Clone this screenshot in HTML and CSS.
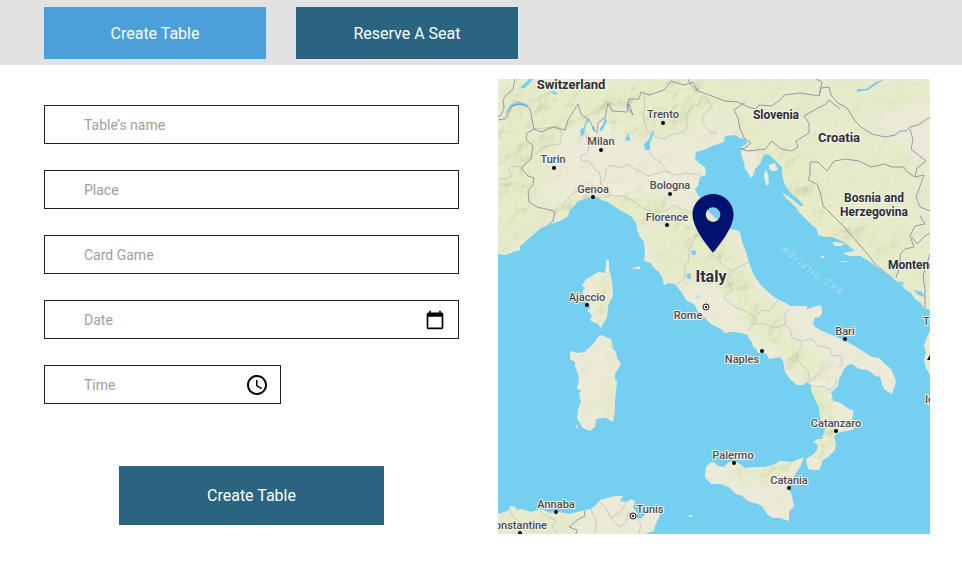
FILE: index.html
```html
<!DOCTYPE html>
<html lang="en">
<head>
<meta charset="utf-8">
<meta name="viewport" content="width=device-width, initial-scale=1">
<title>Create Table</title>
<link rel="stylesheet" href="styles.css">
</head>
<body>
<header class="topbar">
  <button type="button" class="btn btn-tab btn-active">Create Table</button>
  <button type="button" class="btn btn-tab">Reserve A Seat</button>
</header>
<main class="content">
  <form class="form">
    <div class="field"><input class="input" type="text" aria-label="Table’s name" placeholder="Table’s name"></div>
    <div class="field"><input class="input" type="text" aria-label="Place" placeholder="Place"></div>
    <div class="field"><input class="input" type="text" aria-label="Card Game" placeholder="Card Game"></div>
    <div class="field">
      <input class="input" type="text" aria-label="Date" placeholder="Date">
      <button type="button" class="picker" aria-label="Pick a date">
        <svg width="20" height="20" viewBox="0 0 24 24"><path d="M20 3h-1V1h-2v2H7V1H5v2H4c-1.1 0-2 .9-2 2v16c0 1.1.9 2 2 2h16c1.1 0 2-.9 2-2V5c0-1.1-.9-2-2-2zm0 18H4V8h16v13z"/></svg>
      </button>
    </div>
    <div class="field field-short">
      <input class="input" type="text" aria-label="Time" placeholder="Time">
      <button type="button" class="picker" aria-label="Pick a time">
        <svg width="24" height="24" viewBox="0 0 24 24"><path d="M12 2C6.5 2 2 6.5 2 12s4.500 10 10 10 10-4.500 10-10S17.500 2 12 2zm0 18c-4.400 0-8-3.600-8-8s3.600-8 8-8 8 3.600 8 8-3.600 8-8 8z"/><path d="M12.500 7H11v6l5.200 3.200.8-1.300-4.500-2.700z"/></svg>
      </button>
    </div>
    <button type="submit" class="btn btn-submit">Create Table</button>
  </form>
  <svg class="map" viewBox="0 0 432 455" role="img" aria-label="Map of Italy">
    <defs>
      <path id="land" d="M0 0H432V231L426 229 423 224 417 220 413 214 407 210 404 206 399 203 393 197 387 193 379 188 371 182 364 178 357 172 351 167 346 163 340 160 334 158 327 158 320 156 319 150 315 147 311 143 306 138 301 133 298 128 294 125 301 127 306 127 304 124 299 119 294 115 289 109 286 103 284 95 284 88 279 83 274 78 270 75 266 76 264 80 262 85 257 90 256 95 253 99 250 94 247 90 246 84 244 78 243 73 242 69 245 67 249 65 248 60 242 59 237 56 227 57 226 63 220 65 214 67 208 70 202 72 198 73 197 80 201 84 207 88 208 96 202 98 200 107 197 110 199 114 203 120 211 133 221 142 232 150 238 151 242 153 244 163 248 173 251 183 254 192 257 198 263 206 269 212 276 218 281 221 286 223 292 227 309 227 309 230 313 229 318 227 322 226 324 229 324 235 321 238 317 239 315 243 316 247 322 251 329 254 337 257 347 262 357 267 366 273 374 278 381 279 387 285 393 290 397 299 398 303 394 315 390 313 386 310 384 305 382 298 377 297 373 293 369 291 361 290 354 285 350 286 346 290 344 295 341 300 340 307 336 311 333 313 335 322 340 323 344 325 351 330 356 332 354 340 357 345 356 350 349 352 342 353 338 355 336 358 338 365 337 371 331 377 324 382 323 387 321 391 315 391 310 390 308 380 316 375 319 371 320 366 315 363 320 360 324 360 326 354 327 350 324 342 322 338 321 328 317 320 314 313 313 307 310 303 304 306 299 306 292 300 287 293 286 287 285 281 282 278 277 279 271 280 269 276 267 274 260 274 258 270 255 268 254 263 251 260 250 256 247 255 238 253 234 253 227 254 224 251 221 249 213 245 206 238 200 233 197 226 188 221 184 214 177 205 170 204 166 206 165 201 162 194 155 188 153 184 146 182 147 175 146 163 142 158 139 150 138 144 134 138 128 134 123 132 116 127 110 123 104 121 99 118 95 117 87 120 80 122 76 127 72 130 70 137 62 142 50 146 43 149 37 154 30 160 26 164 22 167 22 171 15 173 8 176 0 175Z
      M108 180 111 182 111 190 113 197 114 204 115 217 112 222 110 227 109 238 106 243 103 249 100 245 95 243 92 241 94 237 92 234 89 232 92 229 90 224 86 222 88 218 84 213 87 209 84 207 88 200 94 197 100 193 107 194 108 187Z
      M104 256 108 258 113 260 114 265 115 270 118 273 119 279 123 285 120 290 117 295 117 300 119 303 118 311 117 321 117 330 115 343 108 339 103 339 98 340 97 348 92 352 85 349 79 340 80 330 83 323 81 315 83 311 79 310 81 300 80 295 77 287 77 283 72 280 72 272 80 274 86 273 92 268 96 264 100 258Z
      M306 378 304 383 302 388 298 394 294 400 291 405 291 410 294 417 296 427 291 433 291 442 282 439 276 439 271 437 267 432 264 427 257 424 251 423 244 417 238 415 231 408 222 405 213 405 207 398 208 388 212 384 216 383 220 387 226 388 231 383 239 383 247 389 257 388 267 388 275 386 282 382 294 383Z
      M0 435 10 432 12 427 16 427 19 431 23 430 33 433 43 430 52 434 60 433 72 435 83 432 93 430 98 426 102 421 109 419 117 417 125 417 122 422 128 423 134 420 137 423 135 428 139 434 138 438 142 440 146 437 150 432 163 434 160 440 157 447 156 452 147 455H0Z
      M432 252 428 260 426 267 428 274 426 281 428 289 432 296Z
      M134 190 142 187 142 190 138 190ZM271 86 277 84 280 91 275 92 271 90ZM267 91 270 94 271 106 268 106 266 98ZM284 113 294 120 302 127 296 126 288 119ZM334 163 346 164 344 167 337 167ZM345 174 357 172 369 176 364 177 351 177ZM343 182 350 182 350 183 343 183ZM323 177 326 177 326 179 323 179ZM78 345 80 348 78 349ZM191 436H194V438H191Z"/>
      <clipPath id="coast"><use href="#land"/></clipPath>
      <filter id="soft" x="-20%" y="-20%" width="140%" height="140%"><feGaussianBlur stdDeviation="5"/></filter>
      <filter id="relief" x="0" y="0" width="100%" height="100%">
        <feTurbulence type="fractalNoise" baseFrequency=".045" numOctaves="3" seed="8"/>
        <feColorMatrix values="0 0 0 0 0  0 0 0 0 0  0 0 0 0 0  1 0 0 0 0"/>
        <feDiffuseLighting surfaceScale="7" diffuseConstant="1.300" lighting-color="#fbffd8"><feDistantLight azimuth="225" elevation="52"/></feDiffuseLighting>
      </filter>
      <mask id="hills">
        <rect width="432" height="455" fill="#333"/>
        <g filter="url(#soft)" fill="none" stroke="#fff" stroke-linejoin="round">
          <path stroke-width="46" d="M-5 10 15 50 15 100 10 150M30 40 100 35 160 28 210 20"/>
          <path stroke-width="22" d="M55 138 95 110 130 118 180 138 218 175 238 210 265 238 290 270 320 300 330 340 320 380M250 65 280 80 310 120 350 150 400 180"/>
          <path stroke-width="16" d="M103 195V240M240 392 290 388"/>
        </g>
      </mask>
    </defs>
    <rect class="sea" width="432" height="455"/>
    <use href="#land" class="land"/>
    <g clip-path="url(#coast)">
      <g class="green" filter="url(#soft)">
        <path d="M0 0H432V20L370 40 300 25 270 55 215 35 195 55 160 62 130 58 105 40 60 60 50 100 45 115 60 135 0 178Z"/>
        <path d="M50 145 65 120 95 112 130 118 150 112 180 125 205 130 235 155 250 190 265 220 280 225 295 265 305 300 330 310 340 345 325 385 305 370 310 330 285 275 255 255 235 225 210 205 190 165 150 150 110 130Z"/>
        <path d="M225 25 300 30 340 25 400 60 432 100V230L380 190 290 130 280 90 235 65Z"/>
        <path d="M140 145 190 150 210 205 165 205ZM94 195H112V235L100 245ZM105 300H120V340H108ZM82 325 95 320 94 350ZM225 390 300 382 285 405 240 400ZM0 428 90 433 70 455H0ZM290 260 315 270 330 285 310 300ZM112 262H119V295H112Z"/>
      </g>
      <rect class="relief" width="432" height="455" filter="url(#relief)" mask="url(#hills)"/>
      <g class="sea">
        <path d="M31 0 25 6 22 9 27 9 32 4 35 0ZM7 35 12 26 20 22 31 26 29 28 20 26 13 29 8 35ZM53 12 58 13 59 16 55 15ZM89 39 92 40 88 46 86 55 83 58 82 51 86 48ZM107 38 109 42 104 52 101 51 105 45ZM95 46 97 49 96 53 94 50ZM130 54 132 60 132 62 127 61ZM155 51 156 54 152 64 152 71 147 71 146 65 151 60ZM387 0 379 5 370 11 359 13 359 10 368 10 378 3ZM193 171 198 172 198 176 194 176ZM188 195 192 194 193 200 190 200ZM198 216 201 217 200 219ZM397 202 405 203 407 206 401 204ZM416 211 424 213 427 218 420 216ZM131 433 134 436 132 438Z"/>
      </g>
      <g class="region">
        <path d="M35 50 48 49 60 47 64 55 62 65 53 66 44 69 38 75M88 57 91 67 89 75 82 77 84 82 91 82 97 91 101 93 103 99 102 105 107 99 108 90 112 86 122 89 129 85 139 91 151 97 167 92 178 96 189 94 203 96M103 105 110 115 116 117 125 117 133 121 145 129 157 134 169 131 177 126 184 131M64 130 68 122 75 114 86 109 96 106M146 13 147 28 145 37 149 51 158 58 167 60 172 56 186 53 189 47 188 35 193 30 201 25 204 17 210 20 214 28 206 35 204 43 211 52 219 55M151 71 153 76 162 83 172 94M0 100 7 100 14 97 10 91 14 87 22 88"/>
        <path d="M199 155 195 163 191 171 191 182 186 188 187 198 180 205M216 170 222 176 222 184 233 192 245 186 252 183M233 192 229 201 234 211 226 219 233 225 239 229 249 233 256 238 256 245 250 252M256 238 265 231 271 232 280 221M256 245 266 245 277 249 287 245 287 234 292 229M287 245 292 250 294 259 303 262 314 260 320 267 332 269 334 276 343 277 344 286 340 288M303 262 304 268 298 275 302 284 310 292 312 303M312 306 320 308 326 307 329 311 336 309 339 300"/>
        <path d="M11 429 15 438 22 443 34 445 36 453M42 431 49 438 58 441 54 448 60 455M93 430 98 442 97 455M101 422 109 431 113 439 123 433 128 424M113 439 121 448 128 444 130 434M138 438 143 445 141 455"/>
      </g>
      <g class="border">
        <path d="M17 0 15 10 8 16 5 21 6 29 3 36 0 38M0 41 7 40 11 33 15 26 25 25 32 30 34 40 36 50 43 53 55 48 67 51 70 41 80 25 83 35 92 42 96 51 99 54 100 44 107 38 110 24 114 32 129 33 131 25 135 36 129 28 131 20 141 20 143 13 151 16 166 11 173 2 186 6 195 3 200 12 214 17 227 22 240 23 250 28 258 30 261 26 274 27 283 20 286 16 302 14 315 16 321 17 323 9 331 8 333 16 340 24 349 29 357 42 363 48 374 55 387 58 397 56 402 52 408 52 412 48 420 46 432 38"/>
        <path d="M36 50 29 54 28 60 35 67 33 80 26 86 23 89 30 97 36 99 35 106 30 112 31 123 39 128 52 131 57 133 55 142 50 146M247 23 236 31 240 39 242 49 246 59 253 64 247 69 241 70 251 72 267 70 274 62 283 70 294 72 300 68 298 62 311 54 311 44 306 37 320 29 328 25 331 21 342 30"/>
        <path d="M412 50 415 61 413 70 428 82 419 89 417 98 408 92 406 88 394 88 386 85 373 88 361 82 348 80 336 82 329 92 320 83 312 83 312 96 310 101 319 105 323 116 325 127 338 140 348 150 359 163 368 173 377 185 393 198 397 205M417 98 426 96 418 118 422 128 432 132M422 137 427 145 417 147 412 157 416 168 407 170 402 175 402 187 398 199M414 158 419 165 427 157 432 154M432 175 425 197 427 210 427 229M86 431 87 437 79 441 71 448 79 451 78 455M321 17 324 3 318 0M190 0 193 6 200 12"/>
      </g>
    </g>
    <g class="label country" text-anchor="middle">
      <text class="wide-country" x="73" y="10">Switzerland</text>
      <text x="278" y="40">Slovenia</text>
      <text class="wide-country" x="341" y="63">Croatia</text>
      <text x="376" y="123">Bosnia and</text>
      <text x="376" y="137">Herzegovina</text>
      <text x="390" y="190" text-anchor="start">Montenegro</text>
      <text class="main-country" x="213" y="203">Italy</text>
    </g>
    <path id="adriatic" d="M283 171Q310 196 352 222" fill="none"/>
    <text class="sea-label"><textPath href="#adriatic">Adriatic Sea</textPath></text>
    <g class="label city" text-anchor="middle">
      <text x="165" y="39">Trento</text>
      <text x="103" y="66">Milan</text>
      <text x="55" y="84">Turin</text>
      <text x="95" y="114">Genoa</text>
      <text x="172" y="110">Bologna</text>
      <text x="169" y="142">Florence</text>
      <text x="89" y="222">Ajaccio</text>
      <text x="190" y="240">Rome</text>
      <text x="347" y="256">Bari</text>
      <text x="244" y="284">Naples</text>
      <text x="338" y="348">Catanzaro</text>
      <text x="235" y="380">Palermo</text>
      <text x="291" y="405">Catania</text>
      <text x="58" y="429">Annaba</text>
      <text x="152" y="434">Tunis</text>
      <text x="49" y="450" text-anchor="end">Constantine</text>
      <text x="425" y="246" text-anchor="start">Tirana</text>
      <text x="427" y="324" text-anchor="start">Igoumenitsa</text>
    </g>
    <g class="dots">
      <circle cx="165" cy="44" r="2"/><circle cx="103" cy="71" r="2"/><circle cx="56" cy="89" r="2"/>
      <circle cx="95" cy="118" r="2"/><circle cx="172" cy="115" r="2"/><circle cx="169" cy="146" r="2"/>
      <circle cx="89" cy="226" r="2"/><circle cx="347" cy="260" r="2"/><circle cx="264" cy="272" r="2"/>
      <circle cx="338" cy="352" r="2"/><circle cx="236" cy="384" r="2"/><circle cx="291" cy="409" r="2"/>
      <circle cx="58" cy="433" r="2"/><circle cx="22" cy="454" r="2"/><path d="M432 276 429 281H432Z"/>
      <circle cx="208" cy="228" r="1"/><circle cx="135" cy="437" r="1"/>
      <g class="ring"><circle cx="208" cy="228" r="3"/><circle cx="135" cy="437" r="3"/></g>
    </g>
    <path class="pin" transform="translate(179.900 109.200) scale(2.930)" d="M12 2C8.130 2 5 5.130 5 9c0 5.250 7 13 7 13s7-7.750 7-13c0-3.870-3.130-7-7-7zm0 9.500a2.500 2.500 0 1 1 0-5 2.500 2.500 0 0 1 0 5z"/>
  </svg>
</main>
</body>
</html>
```

FILE: styles.css
```css
* {
  box-sizing: border-box;
}

body {
  margin: 0;
  background: #fff;
  font-family: Roboto, "Liberation Sans", sans-serif;
}

.topbar {
  display: flex;
  gap: 30px;
  padding: 7px 44px 6px;
  background: #e2e2e2;
}

.btn {
  border: 0;
  padding: 0 16px;
  background: #2a6480;
  color: #fff;
  font: inherit;
  font-size: 16px;
  cursor: pointer;
}

.btn-tab {
  width: 222px;
  height: 52px;
}

.btn-active {
  background: #4ba0d9;
}

.content {
  display: grid;
  grid-template-columns: 415fr 432fr;
  gap: 39px;
  padding: 14px 32px 28px 44px;
  align-items: start;
}

.form {
  display: flex;
  flex-direction: column;
  gap: 26px;
  padding-top: 26px;
}

.field {
  position: relative;
}

.field-short {
  width: 57%;
}

.input {
  display: block;
  width: 100%;
  height: 39px;
  padding: 0 48px 0 39px;
  border: 1px solid #222;
  border-radius: 0;
  background: #fff;
  color: #222;
  font: inherit;
  font-size: 14px;
}

.input::placeholder {
  color: #9e9e9e;
  opacity: 1;
}

.picker {
  position: absolute;
  top: 0;
  right: 8px;
  display: flex;
  align-items: center;
  justify-content: center;
  width: 32px;
  height: 100%;
  padding: 0;
  border: 0;
  background: none;
}

.btn-submit {
  align-self: center;
  width: 64%;
  height: 59px;
  margin-top: 36px;
}

.map {
  display: block;
  width: 100%;
  height: auto;
}

.sea {
  fill: #75cff0;
}

.land {
  fill: #ebead8;
}

.green {
  fill: #e4eac8;
  opacity: 0.85;
}

.relief {
  mix-blend-mode: multiply;
  opacity: 0.22;
}

.region,
.border {
  fill: none;
  stroke-linejoin: round;
}

.region {
  stroke: #bcb9c0;
  stroke-width: 0.7px;
}

.border {
  stroke: #9995aa;
}

.label {
  paint-order: stroke;
  stroke: #f4f3e9;
  stroke-width: 2px;
  stroke-linejoin: round;
}

.country {
  fill: #2e2e36;
  font-size: 12px;
  font-weight: 700;
}

.wide-country {
  font-size: 13px;
}

.main-country {
  font-size: 16px;
}

.city {
  fill: #4b4b55;
  font-size: 11px;
  font-weight: 500;
}

.sea-label {
  fill: #a9def2;
  font-size: 10px;
  font-style: italic;
  letter-spacing: 2px;
}

.ring {
  fill: none;
  stroke: #222;
}

.pin {
  fill: #00116f;
}
```
